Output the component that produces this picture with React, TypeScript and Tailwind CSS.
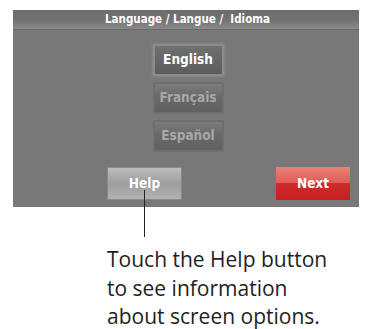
const langs = [
    { label: 'English', active: true },
    { label: 'Français', active: false },
    { label: 'Español', active: false },
];

const screenFont = { fontFamily: '"DejaVu Sans Condensed", "DejaVu Sans", sans-serif' };

export default function App() {
    return (
        <div className="w-[366px] h-[329px] bg-white overflow-hidden pt-[10px]">
            {/* thermostat screen */}
            <div className="ml-[13px] w-[346px] h-[197px] bg-[#787878] flex flex-col">
                <div className="h-[20px] flex items-center justify-center bg-gradient-to-b from-[#6c6c6c] via-[#717171] to-[#8a8a8a] border-b border-[#6a6a6a]">
                    <span className="pl-[3px] text-white text-[11.5px] font-bold leading-none" style={screenFont}>
                        Language / Langue /&nbsp; Idioma
                    </span>
                </div>

                <div className="flex flex-col items-center pl-[4px] mt-[14px] gap-[6px]">
                    {langs.map(l => (
                        <div key={l.label}
                            className={`w-[71px] h-[32px] p-[2px] rounded-[2px] ${l.active ? 'bg-[#8c8c8c] shadow-[0_0_3px_#9a9a9a]' : 'bg-[#6e6e6e]'}`}
                        >
                            <div
                                className={`w-full h-full flex items-center justify-center font-bold text-[13.5px] leading-none ${l.active ? 'bg-gradient-to-b from-[#707070] to-[#5c5c5c] text-white' : 'bg-gradient-to-b from-[#7c7c7c] via-[#686868] to-[#606060] text-[#a8a8a8]'}`}
                                style={screenFont}
                            >
                                {l.label}
                            </div>
                        </div>
                    ))}
                </div>

                <div className="flex mt-[15px] pl-[94px]">
                    <div className="relative w-[75px] h-[33px] bg-gradient-to-b from-[#bdbdbd] via-[#9e9e9e] to-[#b2b2b2] border border-[#8a8a8a] flex items-center justify-center">
                        <span className="text-white font-bold text-[13.5px] leading-none" style={screenFont}>Help</span>
                        {/* callout line */}
                        <div className="absolute left-[36px] top-[22px] w-px h-[47px] bg-[#222]" />
                    </div>
                    <div className="ml-[94px] w-[74px] h-[33px] flex items-center justify-center bg-[linear-gradient(to_bottom,#ec8078,#de5b55_50%,#cf2a2c_50%,#c51f24)]">
                        <span className="text-white font-bold text-[13.5px] leading-none" style={screenFont}>Next</span>
                    </div>
                </div>
            </div>

            <p className="ml-[107px] mt-[38px] text-[#231f20] text-[21px] leading-[28.5px]" style={{ fontFamily: '"Open Sans", "Noto Sans", sans-serif' }}>
                Touch the Help button<br />
                to see information<br />
                about screen options.
            </p>
        </div>
    );
}
